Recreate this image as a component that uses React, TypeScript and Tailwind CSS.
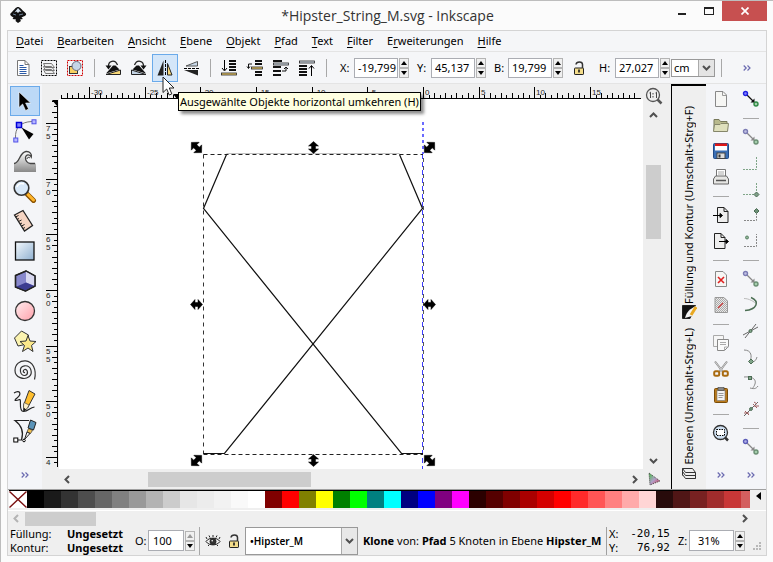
import React from "react";

type Kids = { children?: React.ReactNode };

const ui = "font-['Noto_Sans','Open_Sans',sans-serif] text-[11px] leading-4 text-black";

/* ---------- small building blocks ---------- */

function Svg({ size, children }: Kids & { size: 16 | 18 | 24 }) {
  const cls = size === 24 ? "size-6" : size === 18 ? "size-[18px]" : "size-4";
  return (
    <svg viewBox={`0 0 ${size} ${size}`} className={`${cls} shrink-0`} fill="none" stroke="#222" aria-hidden="true">
      {children}
    </svg>
  );
}

function ToolButton({ label, active, children }: Kids & { label: string; active?: boolean }) {
  return (
    <button
      aria-label={label}
      className={`flex h-7 w-[26px] shrink-0 items-center justify-center border ${
        active ? "border-[#6aaaea] bg-[#d4e6f9]" : "border-transparent"
      }`}
    >
      {children}
    </button>
  );
}

function VSep() {
  return (
    <span className="flex w-3 shrink-0 justify-center">
      <span className="h-[18px] w-px bg-[#a8a8a8]" />
    </span>
  );
}

function HSep() {
  return (
    <span className="flex h-3 w-full shrink-0 items-center justify-center">
      <span className="h-px w-4 bg-[#a8a8a8]" />
    </span>
  );
}

function More() {
  return (
    <button aria-label="Mehr" className="flex h-7 w-full items-center justify-center">
      <svg viewBox="0 0 8 6" className="h-[6px] w-2" fill="none" stroke="#6a6ab0" strokeWidth="1.2">
        <path d="M.7.5 3.2 3 .7 5.5M4.5.5 7 3 4.5 5.5" />
      </svg>
    </button>
  );
}

function Spinner({ dimUp }: { dimUp?: boolean }) {
  return (
    <span className="flex w-[10px] shrink-0 flex-col">
      <button aria-label="Erhöhen" className="flex h-[10px] items-center justify-center border border-[#b4b4b4] bg-[#f0f0f0]">
        <svg viewBox="0 0 6 4" className="h-1 w-[6px]" fill={dimUp ? "#999" : "#000"}>
          <path d="M3 0 6 4H0z" />
        </svg>
      </button>
      <button aria-label="Verringern" className="flex h-[10px] items-center justify-center border border-[#b4b4b4] bg-[#f0f0f0]">
        <svg viewBox="0 0 6 4" className="h-1 w-[6px]" fill="#000">
          <path d="M0 0h6L3 4z" />
        </svg>
      </button>
    </span>
  );
}

function NumberField({ id, label, value, wide }: { id: string; label: string; value: string; wide?: boolean }) {
  return (
    <span className="flex shrink-0 items-center">
      <label htmlFor={id} className={wide ? "w-4" : "w-[14px]"}>
        {label}
      </label>
      <input
        id={id}
        defaultValue={value}
        className="mr-px h-5 w-11 border border-[#abadb3] bg-white pl-[3px] outline-none"
      />
      <Spinner />
    </span>
  );
}

function Chevron({ dir, dim }: { dir: "left" | "right" | "up" | "down"; dim?: boolean }) {
  const d = {
    left: "M6 1 2.5 4.5 6 8",
    right: "M3 1l3.5 3.5L3 8",
    up: "M1 6l3.5-3.5L8 6",
    down: "M1 3l3.5 3.5L8 3",
  }[dir];
  return (
    <svg viewBox="0 0 9 9" className="size-[9px]" fill="none" stroke={dim ? "#b4b4b4" : "#505050"} strokeWidth="2">
      <path d={d} />
    </svg>
  );
}

function Unlock() {
  return (
    <Svg size={16}>
      <rect x="3.5" y="8" width="9" height="6.5" rx=".6" fill="#f3dc8a" stroke="#222" />
      <path d="M11.5 8V4.500C11.500 1 5.500 1 5 4.500" stroke="#333" strokeWidth="1.500" />
      <path d="M8 9.500v3" strokeWidth="1.700" />
    </Svg>
  );
}

/* ---------- top tool bar icons ---------- */

const IconSelectAll = (
  <Svg size={18}>
    <path d="M3.500 1.500h7.500l4 4v11h-11.500z" fill="#fff" stroke="#777" />
    <path d="M11 1.500v4h4" stroke="#777" />
    <path d="M5.500 6.500h4M5.500 8.500h7M5.500 10.500h7M5.500 12.500h7M5.500 14.500h7" stroke="#2a5aa8" strokeWidth="1.200" />
  </Svg>
);
const IconSelectLayers = (
  <Svg size={18}>
    <rect x="1.500" y="1.500" width="15" height="15" stroke="#000" strokeDasharray="2 1" />
    <path d="M3.500 10.500h8l3 4h-9zM3.500 7.500h8l3 4h-9zM3.500 4.500h8l3 4h-9z" fill="#eee" stroke="#777" />
  </Svg>
);
const IconDeselect = (
  <Svg size={18}>
    <rect x="1.500" y="1.500" width="15" height="15" stroke="#d00000" strokeDasharray="2 1" />
    <rect x="3.500" y="7.500" width="8" height="7" fill="#f8d060" stroke="#333" />
    <circle cx="10.500" cy="7" r="4.500" fill="#c6d6e6" stroke="#667" />
  </Svg>
);
const IconRotL = (
  <Svg size={18}>
    <path d="M9 6.500h2.500l4 4L2 14.500z" fill="#111" stroke="none" />
    <path d="M2 15.500h14.500v-4.500z" fill="#f8d878" stroke="#222" />
    <path d="M4.500 8C4 1.500 11 0 13.500 6" strokeWidth="1.300" />
    <path d="M1.500 6.500h6l-3 4z" fill="#111" stroke="none" />
  </Svg>
);
const IconRotR = (
  <Svg size={18}>
    <path d="M9 6.500H6.500l-4 4L16 14.500z" fill="#111" stroke="none" />
    <path d="M16 15.500H1.500v-4.500z" fill="#c4d4e4" stroke="#222" />
    <path d="M13.500 8C14 1.500 7 0 4.500 6" strokeWidth="1.300" />
    <path d="M16.500 6.500h-6l3 4z" fill="#111" stroke="none" />
  </Svg>
);
const IconFlipH = (
  <Svg size={18}>
    <path d="M7.500 1.500v15H1.500z" fill="#222" stroke="none" />
    <path d="M11.500 4.500v11.500h4.500z" fill="#f5d77a" stroke="#222" />
    <path d="M9.500 1v16" stroke="#000" strokeDasharray="3 1" />
  </Svg>
);
const IconFlipV = (
  <Svg size={18}>
    <path d="M15.500 2.500v4.500H4z" fill="#c8d8e8" stroke="#555" />
    <path d="M2 11h14v5.500z" fill="#222" stroke="none" />
    <path d="M2 9.500h15" stroke="#000" strokeDasharray="3 1" />
  </Svg>
);
const IconToBottom = (
  <Svg size={18}>
    <path d="M4.500 1v10M2 9l2.500 3L7 9" stroke="#000" />
    <path d="M9 2h7M9 5h7M9 8h7M9 11h7" stroke="#111" strokeWidth="2" />
    <rect x="1.500" y="14" width="15" height="2" fill="#f3d06a" stroke="#222" strokeWidth=".8" />
  </Svg>
);
const IconLower = (
  <Svg size={18}>
    <path d="M9 2h7M9 5h7M9 13h7M9 16h7" stroke="#111" strokeWidth="2" />
    <path d="M6 5H2.500v4M1 7.500l1.500 2L4 7.500" stroke="#111" />
    <rect x="5.500" y="8" width="11" height="2" fill="#f3d06a" stroke="#222" strokeWidth=".8" />
  </Svg>
);
const IconRaise = (
  <Svg size={18}>
    <path d="M1 2h9M1 8h8M1 12h8M1 16h8" stroke="#111" strokeWidth="2" />
    <rect x="1.500" y="4" width="15" height="2" fill="#dde6f0" stroke="#222" strokeWidth=".8" />
    <path d="M10 12h4V8.500M12 10l2-2 2 2" stroke="#111" />
  </Svg>
);
const IconToTop = (
  <Svg size={18}>
    <rect x="1.500" y="2" width="15" height="2" fill="#dde6f0" stroke="#222" strokeWidth=".8" />
    <path d="M1 7h8M1 10h8M1 13h8M1 16h8" stroke="#111" strokeWidth="2" />
    <path d="M13.500 17V7M11 9.500 13.500 6.500 16 9.500" stroke="#000" />
  </Svg>
);

/* ---------- tool box icons ---------- */

const toolbox: { label: string; icon: React.ReactNode }[] = [
  {
    label: "Auswählen",
    icon: <path d="M6 3v15.500l3.600-3.500 3 6.500 3-1.500-3-6h5z" fill="#000" stroke="#fff" strokeWidth=".6" />,
  },
  {
    label: "Knoten bearbeiten",
    icon: (
      <>
        <path d="M2.500 19C2 9 7 3 19 2.500" stroke="#777" />
        <rect x="3.500" y="3.500" width="5" height="5" fill="#8080ff" stroke="#0000d8" strokeWidth="1.500" />
        <rect x="19" y=".8" width="4" height="4" fill="#b8b8ff" stroke="#5050e8" />
        <rect x=".8" y="19" width="4" height="4" fill="#b8b8ff" stroke="#5050e8" />
        <path d="M8.500 8.500 20.500 15 16 20.500z" fill="#000" stroke="none" />
      </>
    ),
  },
  {
    label: "Verbessern",
    icon: (
      <>
        <path d="M1 15C6 14 6 3 13 2.500c4 0 6 3 5 7-1-2-4-3-5-1s0 5 3 6h7v8.500H1z" fill="url(#waveFill)" stroke="none" />
        <path d="M1 14.500c6 0 5-11 12-12 4-.3 6 3 5.300 5.500C17 5 13 5 12.500 8.500c-.3 3 2 6 5 6H22" stroke="#444" strokeWidth="1.300" />
        <path d="M14 10c0-2 2-2 3-1" stroke="#444" />
      </>
    ),
  },
  {
    label: "Zoom",
    icon: (
      <>
        <path d="M14.500 15.500l6 6" stroke="#8a5200" strokeWidth="5" strokeLinecap="round" />
        <path d="M15 15.500l5.500 5.500" stroke="#ffb52b" strokeWidth="3" strokeLinecap="round" />
        <circle cx="8.500" cy="9" r="7.300" fill="#d8e8f8" stroke="#333" strokeWidth="1.600" />
        <path d="M4 8c1-3 4-4 7-3" stroke="#fff" strokeWidth="1.500" />
      </>
    ),
  },
  {
    label: "Messen",
    icon: (
      <>
        <path d="M1.500 6 10 1.500 19.500 16.500 11.500 22z" fill="#f6d5c3" stroke="#222" strokeWidth="1.300" />
        <path d="M2.500 8l3-1.500M4 10.500l2-1M5.500 12.500l3-1.500M7 15l2-1M8.500 17l3-1.500M10 19.500l2-1" />
      </>
    ),
  },
  {
    label: "Rechteck",
    icon: <rect x="2.500" y="3" width="18.500" height="18" fill="url(#rectFill)" stroke="#111" strokeWidth="1.300" />,
  },
  {
    label: "3D-Box",
    icon: (
      <>
        <path d="M2.500 6.500 13 2l9 5v10l-9.500 5L2.500 18z" fill="#8888cc" strokeWidth="1.400" />
        <path d="M13 2.500 21.500 7.200V17L13 13.500z" fill="#d8d8f0" stroke="none" />
        <path d="M2.500 18 13 13.500 21.500 17l-9 4.500z" fill="#3c3c90" stroke="none" />
        <path d="M2.500 6.500 13 2l9 5v10l-9.500 5L2.500 18z" strokeWidth="1.300" />
      </>
    ),
  },
  { label: "Ellipse", icon: <circle cx="12" cy="12" r="9.500" fill="url(#circleFill)" stroke="#333" strokeWidth="1.300" /> },
  {
    label: "Sterne",
    icon: (
      <>
        <path d="M1.500 9 8.500 2l7 4-1 9-9.500 2z" fill="#fbf3b0" stroke="#333" />
        <path d="m15 6.500 2 5.500 6 .5-4.500 4 1.500 6-5-3.500-5.500 3.500 2-6L7 12.500l6-.5z" fill="#fbe88a" stroke="#333" />
      </>
    ),
  },
  {
    label: "Spirale",
    icon: (
      <path
        d="M12 13.500c-2 .5-2.500-2.500-.3-3 3.300-.5 4 5 .3 6C7 17 5 8 11.500 6.800c7-.8 8.500 8 4.500 11C11 21.500 2 18.500 2 11.500 2 5 7 1.500 12.500 1.800c7 .4 11.500 8.500 9 18.700"
        stroke="#333"
        strokeWidth="1.200"
      />
    ),
  },
  {
    label: "Freihandlinien",
    icon: (
      <>
        <path d="M1 4c6-4 8 1 3 5-4 3-1 3 2.500 1.500C9 10 5 22 10.500 22.500c5 0 6-4 11-4.500" strokeWidth="1.200" />
        <path d="M16 1.500 22 5l-7.500 14-3.500 3-.5-5.500z" fill="#ffbf30" stroke="#333" />
        <path d="M11 13.500 16 16l-1.500 3-3.500 3-.5-5z" fill="#fdf0c8" stroke="#333" strokeWidth=".6" />
        <path d="M11 19.500l1.700 1L11 22z" fill="#000" />
      </>
    ),
  },
  {
    label: "Bézierkurven",
    icon: (
      <>
        <path d="M16 1.500H2C8 6 11 13 8.500 21H3" strokeWidth="1.200" />
        <rect x=".8" y="19" width="4" height="4" fill="#fff" stroke="#000" />
        <circle cx="11" cy="21.500" r="1.300" fill="#fff" stroke="#000" />
        <path d="M17.500 1 23 3.500 20.500 11 15 9z" fill="#5a93b8" stroke="#222" />
        <path d="M15.500 9.500l4 2-2 3-3.500-1.500z" fill="#f0c050" stroke="#333" strokeWidth=".7" />
        <path d="M14 13l3 1.500-5.500 6z" fill="#eee" stroke="#222" />
      </>
    ),
  },
];

/* ---------- command bar icons ---------- */

const page = <path d="M3.500 1.500h7.500l3.500 3.500v11.500h-11z" fill="#f6f6f4" stroke="#888" />;

const commands: { label: string; sep?: boolean; icon: React.ReactNode }[] = [
  { label: "Neu", icon: <>{page}<path d="M10.500 2v3.500h4" stroke="#999" /></> },
  {
    label: "Öffnen",
    icon: (
      <>
        <path d="M2 15V3.500h5l1.500 2H15V15z" fill="#b8b98c" stroke="#77785a" />
        <path d="M1.500 15.500 2.500 8.500H8l1-1h7.500l-1 8z" fill="#dfe0bd" stroke="#85866a" />
      </>
    ),
  },
  {
    label: "Speichern",
    icon: (
      <>
        <rect x="1.500" y="1.500" width="15" height="15" rx="1" fill="#3b6fb5" stroke="#204a87" />
        <rect x="3" y="2" width="12" height="6.500" fill="#fff" stroke="none" />
        <rect x="3" y="1.500" width="12" height="2.500" fill="#e01818" stroke="none" />
        <rect x="5" y="11" width="8" height="5.500" fill="#ddd" stroke="#444" />
        <rect x="6.500" y="12.500" width="2" height="3" fill="#333" stroke="none" />
      </>
    ),
  },
  {
    label: "Drucken",
    icon: (
      <>
        <path d="M4.500 8V1.500h9V8" fill="#fff" stroke="#777" />
        <path d="M6 4h6M6 6h6" stroke="#aaa" />
        <path d="M3.500 8h11l2 3v5h-15v-5z" fill="#e6e6e4" stroke="#666" />
        <path d="M4 12.500h10" stroke="#555" strokeWidth="1.500" />
      </>
    ),
  },
  {
    label: "Importieren",
    sep: true,
    icon: (
      <>
        <path d="M5.500 1.500h6.500l4 4v11H5.500z" fill="#eee" stroke="#222" />
        <path d="M12 1.500v4h4" stroke="#222" />
        <path d="M1 9.500h9M8 7.500l2.500 2L8 11.500z" fill="#000" stroke="#000" />
      </>
    ),
  },
  {
    label: "Exportieren",
    icon: (
      <>
        <path d="M2.500 1.500H9l4 4v11H2.500z" fill="#eee" stroke="#222" />
        <path d="M9 1.500v4h4" stroke="#222" />
        <path d="M7 9.500h8M14 7.500l2.500 2-2.500 2z" fill="#000" stroke="#000" />
      </>
    ),
  },
  { label: "Rückgängig", sep: true, icon: <>{page}<path d="M6 7l6 6M12 7l-6 6" stroke="#e02020" strokeWidth="1.600" /></> },
  {
    label: "Wiederholen",
    icon: (
      <>
        <path d="M3 1.500h9l3.500 3.500v11.500H3z" fill="url(#checker)" stroke="#999" />
        <path d="M6 12l5-5" stroke="#d04040" strokeWidth="1.300" />
      </>
    ),
  },
  {
    label: "Kopieren",
    sep: true,
    icon: (
      <>
        <path d="M1.500 1.500h10v11h-10z" fill="#f6f6f6" stroke="#aaa" />
        <path d="M5.500 5.500h11v7l-4 4h-7z" fill="#fafafa" stroke="#888" />
        <path d="M8 8.500h6M8 10.500h6M12.500 16.500v-3.500h4" stroke="#aaa" />
      </>
    ),
  },
  {
    label: "Ausschneiden",
    icon: (
      <>
        <path d="M3 1.500 11 12M15 1.500 7 12" stroke="#888" strokeWidth="2" />
        <path d="M3 1.500 11 12M15 1.500 7 12" stroke="#eee" strokeWidth=".7" />
        <rect x="2.200" y="11.200" width="5" height="4.600" rx="1.500" stroke="#a86a10" strokeWidth="2" />
        <rect x="10.800" y="11.200" width="5" height="4.600" rx="1.500" stroke="#a86a10" strokeWidth="2" />
      </>
    ),
  },
  {
    label: "Einfügen",
    icon: (
      <>
        <rect x="2.500" y="2.500" width="13" height="14" rx="1" fill="#b97a1c" stroke="#7a4c08" />
        <rect x="5" y="4.500" width="8" height="10" fill="#f4f4f4" stroke="#777" strokeWidth=".6" />
        <rect x="6" y="1.500" width="6" height="3" fill="#888" stroke="#444" strokeWidth=".6" />
        <path d="M6.500 7.500h5M6.500 9.500h5M6.500 11.500h4" stroke="#999" />
      </>
    ),
  },
  {
    label: "Auswahl zoomen",
    sep: true,
    icon: (
      <>
        <path d="M13 13.500l3 3" strokeWidth="2.500" stroke="#333" />
        <circle cx="8.500" cy="8.500" r="7" fill="#cfe0f2" stroke="#333" strokeWidth="1.300" />
        <rect x="4.500" y="5.500" width="8" height="6" fill="#fff" stroke="#000" strokeDasharray="1.500 1" />
      </>
    ),
  },
];

/* ---------- snap bar icons ---------- */

const diag = (c: string, f: string, a: string, g: string) => (
  <>
    <path d="M4.500 4.500 12 12" stroke={a} strokeWidth="1.300" />
    <path d="M12.500 8.500v4h-4z" fill={a} stroke="none" />
    <circle cx="3.500" cy="3.500" r="2" fill={f} stroke={c} strokeWidth="1.400" />
    <circle cx="14" cy="14" r="2" fill="#a4cfac" stroke={g} strokeWidth="1.400" />
  </>
);
const faded = diag("#7c7cb4", "#c0c0e4", "#888", "#6b8f74");
const dash = { stroke: "#7fa588", strokeDasharray: "2 1" };

const snaps: { label: string; sep?: boolean; icon: React.ReactNode }[] = [
  { label: "Einrasten", icon: diag("#2020e0", "#8080ff", "#111", "#2f8a45") },
  { label: "Umrandungsboxen", sep: true, icon: faded },
  { label: "Kanten", icon: <path d="M1 15.500h13.500V2" {...dash} /> },
  {
    label: "Ecken",
    icon: <><path d="M1 14.500h11M14.500 11V2" {...dash} /><path d="M14.500 12l2.500 2.500-2.500 2.500-2.500-2.500z" fill="#7f9f88" stroke="#4c6c55" /></>,
  },
  {
    label: "Kantenmitten",
    icon: <><path d="M2 14.500h12.500V8" stroke="#888" strokeDasharray="2 1" /><path d="M14.500 2.500 17 5l-2.500 2.500L12 5z" fill="#6b8f74" stroke="#4c6c55" /></>,
  },
  {
    label: "Boxmitten",
    icon: <><path d="M2 14.500h12.500V2" stroke="#888" strokeDasharray="2 1" /><circle cx="5" cy="5.500" r="1.500" fill="#8fb598" stroke="#5a8064" /></>,
  },
  { label: "Knoten", sep: true, icon: faded },
  { label: "Pfade", icon: <><path d="M2 2.500c5 0 10 3 13 6" stroke="#bbb" /><path d="M9 1.500c9 4 6 12-6 13" stroke="#4c6f54" strokeWidth="1.400" /></> },
  { label: "Überschneidungen", icon: <><path d="M1 13 16 5M3 16 14 2" stroke="#666" /><circle cx="8.500" cy="9" r="1.500" fill="#80a488" stroke="#4c6c55" /></> },
  { label: "Spitze Knoten", icon: <><path d="M2 2c8 0 8 7 6 11M9 14c4 0 5-2 6-5" stroke="#888" /><path d="M9 11l2.500 2.500L9 16l-2.500-2.500z" fill="#80a488" stroke="#4c6c55" /></> },
  { label: "Glatte Knoten", icon: <><path d="M2 3c12-1 14 5 8 12M16 12c-2 3-4 3-8 2" stroke="#888" /><rect x="6.500" y="2.500" width="3" height="3" fill="#80a488" stroke="#4c6c55" /></> },
  { label: "Linienmitten", icon: <><path d="M2 16 16 2" stroke="#666" /><path d="M3 11l4 4M2 13h5M11 4l4 4M12 6h5M12 2l3 2" stroke="#a06060" /><circle cx="9" cy="9" r="1.400" fill="#80a488" stroke="#4c6c55" /></> },
  { label: "Andere Punkte", sep: true, icon: diag("#5c5cb8", "#b0b0e8", "#888", "#6b8f74") },
];

/* ---------- rulers and canvas ---------- */

const STEP = 5.565;
const rulerText = "font-['Liberation_Sans',sans-serif] text-[8px]";

function HRuler() {
  const ticks = Array.from({ length: 104 }, (_, k) => k - 65);
  return (
    <svg className="block h-[15px] w-full bg-[#efefef]" aria-hidden="true">
      <path d="M2 14.500H582" stroke="#000" />
      {ticks.map((i) => {
        const x = Math.round(364 + i * STEP) + 0.5;
        const major = i % 10 === 0;
        return <path key={i} d={`M${x} ${major ? 3 : i % 2 ? 11 : 9}V14`} stroke="#000" />;
      })}
      {[-30, -25, -20, -15, -10, -5, 0, 5, 10, 15].map((n) => (
        <text key={n} x={Math.round(364 + n * 2 * STEP) + 2} y="11" className={rulerText} fill="#222">
          {n}
        </text>
      ))}
      <path d="M114 10h8l-4 5z" fill="#000" />
    </svg>
  );
}

function VRuler() {
  const ticks = Array.from({ length: 66 }, (_, k) => k - 4);
  return (
    <svg className="block h-full w-[17px] bg-[#efefef]" aria-hidden="true">
      <path d="M15.500 1V368" stroke="#000" />
      {ticks.map((i) => {
        const y = Math.round(24 + i * STEP) + 0.5;
        return y < 369 ? <path key={i} d={`M${i % 10 === 0 ? 4 : i % 2 ? 12 : 10} ${y}H15`} stroke="#000" /> : null;
      })}
      {["75", "70", "65", "60", "55", "50", "4"].map((n, k) =>
        n.split("").map((c, j) => (
          <text key={`${k}-${j}`} x="4" y={Math.round(24 + k * 10 * STEP) + 8 + j * 8} className={rulerText} fill="#222">
            {c}
          </text>
        )),
      )}
      <path d="M10 1h5v6z" fill="#000" />
    </svg>
  );
}

const arrow = "M-6 0-1.500-5v3h3v-3L6 0 1.500 5V2h-3v3z";
const handles: [number, number, number][] = [
  [196.5, 147.5, 45], [313.5, 147.5, 90], [429.5, 147.5, -45],
  [196.5, 304.5, 0], [429.5, 304.5, 0],
  [196.5, 460.5, -45], [313.5, 460.5, 90], [429.5, 460.5, 45],
];

function Canvas() {
  return (
    <div className="relative overflow-hidden bg-white">
      <svg viewBox="59 99 583 370" className="absolute top-0 left-0 h-[370px] w-[583px]" fill="none">
        <path d="M423 122V154" stroke="#6a6aff" strokeWidth="2" strokeDasharray="3 3" />
        <path d="M422.500 154V469" stroke="#4040ff" strokeDasharray="5 3" />
        <path d="M423.500 154V454" stroke="#555" strokeDasharray="4 4" strokeDashoffset="4" />
        <path d="M203.500 154.500V454" stroke="#333" strokeDasharray="4 4" />
        <path d="M203.500 154.500H423M203.500 454.500H423" stroke="#222" strokeDasharray="4 3" />
        <path d="M226.500 153.500H399.500" stroke="#999" strokeWidth=".6" />
        <path d="M226.500 154.500 203.500 208.500 401.500 453.500H423M399.500 154.500 422.500 208.500 224.500 453.500H203.500" stroke="#111" strokeWidth="1.200" />
        {handles.map(([x, y, r]) => (
          <path
            key={`${x}-${y}`}
            d={arrow}
            transform={`translate(${x} ${y}) rotate(${r})${Math.abs(r) === 45 ? " scale(1.2 1.100)" : ""}`}
            fill="#000"
            stroke="#000"
            strokeWidth=".5"
          />
        ))}
      </svg>
    </div>
  );
}

const swatches = [
  "bg-[#000000]", "bg-[#1a1a1a]", "bg-[#333333]", "bg-[#4d4d4d]", "bg-[#666666]", "bg-[#808080]", "bg-[#999999]",
  "bg-[#b3b3b3]", "bg-[#cccccc]", "bg-[#e6e6e6]", "bg-[#ececec]", "bg-[#f2f2f2]", "bg-[#f9f9f9]", "bg-[#ffffff]",
  "bg-[#800000]", "bg-[#ff0000]", "bg-[#808000]", "bg-[#ffff00]", "bg-[#008000]", "bg-[#00ff00]", "bg-[#008080]",
  "bg-[#00ffff]", "bg-[#000080]", "bg-[#0000ff]", "bg-[#800080]", "bg-[#ff00ff]", "bg-[#2b0000]", "bg-[#550000]",
  "bg-[#800000]", "bg-[#aa0000]", "bg-[#d40000]", "bg-[#ff0000]", "bg-[#ff2a2a]", "bg-[#ff5555]", "bg-[#ff8080]",
  "bg-[#ffaaaa]", "bg-[#ffd5d5]", "bg-[#280b0b]", "bg-[#501616]", "bg-[#782121]", "bg-[#a02c2c]", "bg-[#c83737]",
  "bg-[#d35f5f]",
];

const menus = ["Datei", "Bearbeiten", "Ansicht", "Ebene", "Objekt", "Pfad", "Text", "Filter", "Erweiterungen", "Hilfe"];
/* position of the underlined access key where it is not the first letter */
const accessKey: Record<string, number> = { Erweiterungen: 1 };

function TitleBar() {
  return (
    <header className="flex h-[29px] shrink-0 items-start">
      <svg viewBox="0 0 18 18" className="mt-[5px] ml-2 size-[18px]" aria-hidden="true">
        <path d="M9 1c2 0 3 2 7.500 6 1.500 1.500 0 3-2 3.500l-2 1 1.500 1.500-3 .5 1 1.500L9 17l-2.500-2L7 13.500l-3.500-.5 1-1.500C2 10 .5 9 1.500 7.500 6 3 7 1 9 1z" fill="#111" />
        <path d="M9 2 12.500 6l-2-.5L9 7 7.500 5.500l-2 1z" fill="#d8e4f0" />
        <path d="M4 8l3 1M10 9l4-1" stroke="#6d7f95" />
      </svg>
      <h1 className="mt-[5px] flex-1 pl-20 text-center font-['Open_Sans','Noto_Sans',sans-serif] text-sm leading-5 text-[#333]">
        *Hipster_String_M.svg - Inkscape
      </h1>
      <button aria-label="Minimieren" className="flex h-[19px] w-7 items-end justify-center pb-[5px]">
        <span className="h-[2px] w-2 bg-[#222]" />
      </button>
      <button aria-label="Maximieren" className="flex h-[19px] w-[26px] items-center justify-center">
        <span className="h-2 w-[10px] border border-t-2 border-[#222]" />
      </button>
      <button aria-label="Schließen" className="flex h-5 w-[45px] items-center justify-center bg-[#c75050]">
        <svg viewBox="0 0 8 8" className="size-2" stroke="#fff" strokeWidth="1.700">
          <path d="M.5.500l7 7M7.500.500l-7 7" />
        </svg>
      </button>
      <span className="w-[6px]" />
    </header>
  );
}

function TopBar() {
  return (
    <div className="relative flex h-8 shrink-0 items-center border-b border-[#e4e4e4] bg-[#f5f6f8] pl-[2px]">
      <ToolButton label="Alles auswählen">{IconSelectAll}</ToolButton>
      <ToolButton label="In allen Ebenen auswählen">{IconSelectLayers}</ToolButton>
      <ToolButton label="Auswahl aufheben">{IconDeselect}</ToolButton>
      <VSep />
      <ToolButton label="Gegen Uhrzeigersinn drehen">{IconRotL}</ToolButton>
      <ToolButton label="Im Uhrzeigersinn drehen">{IconRotR}</ToolButton>
      <ToolButton label="Horizontal umkehren" active>{IconFlipH}</ToolButton>
      <ToolButton label="Vertikal umkehren">{IconFlipV}</ToolButton>
      <VSep />
      <ToolButton label="Ganz nach unten">{IconToBottom}</ToolButton>
      <ToolButton label="Absenken">{IconLower}</ToolButton>
      <ToolButton label="Anheben">{IconRaise}</ToolButton>
      <ToolButton label="Ganz nach oben">{IconToTop}</ToolButton>
      <VSep />
      <div className="flex items-center gap-2 pl-2">
        <NumberField id="x" label="X:" value="-19,799" />
        <NumberField id="y" label="Y:" value="45,137" />
        <NumberField id="b" label="B:" value="19,799" />
        <button aria-label="Seitenverhältnis sperren" className="mr-1 size-4">
          <Unlock />
        </button>
        <NumberField id="h" label="H:" value="27,027" wide />
      </div>
      <span className="ml-px flex h-[18px] w-11 shrink-0 border border-[#999] bg-white">
        <select aria-label="Einheit" className="min-w-0 flex-1 appearance-none pl-[2px] leading-4 outline-none">
          <option>cm</option>
        </select>
        <span className="flex w-4 items-center justify-center border-l border-[#aaa] bg-[#e4e4e4]">
          <Chevron dir="down" />
        </span>
      </span>
      <VSep />
      <span className="ml-auto w-[38px]">
        <More />
      </span>
      <div className="pointer-events-none absolute top-[40px] left-[170px] z-20 border border-black bg-[#ffffe1] px-px leading-[17px] whitespace-nowrap shadow-[3px_3px_3px_rgba(0,0,0,0.45)]" role="tooltip">
        Ausgewählte Objekte horizontal umkehren (H)
      </div>
      <svg viewBox="0 0 13 20" className="pointer-events-none absolute top-6 left-[154px] z-30 h-5 w-[13px]">
        <path d="M1 1v15.500l3.700-3.500 2.500 6 2.600-1.100-2.500-5.900H12z" fill="#fff" stroke="#222" />
      </svg>
    </div>
  );
}

function Dock() {
  return (
    <div className="flex w-[35px] shrink-0 flex-col items-center justify-end border-t-2 border-l border-black bg-[#efefef] pr-px pb-2">
      <button className="flex flex-col items-center">
        <span className="rotate-180 leading-4 whitespace-nowrap [writing-mode:vertical-rl]">Füllung und Kontur (Umschalt+Strg+F)</span>
        <Svg size={16}>
          <path d="M1.500 1.500h13L9 14.500H1.500z" fill="#111" />
          <path d="M4 14C6 7 9 5 15 2l-4 10z" fill="#f4f4f4" stroke="none" />
          <path d="M10 11l5-8" stroke="#e8a820" strokeWidth="3" />
        </Svg>
      </button>
      <button className="mt-2 flex flex-col items-center">
        <span className="rotate-180 leading-4 whitespace-nowrap [writing-mode:vertical-rl]">Ebenen (Umschalt+Strg+L)</span>
        <Svg size={16}>
          <path d="M1.500 9.500l3 4h10v-2M1.500 6.500l3 4h10v-2M1.500 3.500l3 4h10l-3-4z" fill="#eee" stroke="#333" />
          <path d="M1.500 3.500v7M14.500 7.500v6" stroke="#333" />
        </Svg>
      </button>
    </div>
  );
}

function Workspace() {
  return (
    <div className="grid min-w-0 flex-1 grid-cols-[17px_minmax(0,1fr)_28px] grid-rows-[15px_minmax(370px,1fr)_20px] bg-[#efefef]">
      <span />
      <HRuler />
      <div className="row-span-3 flex w-[18px] flex-col items-stretch pl-[3px]">
        <button aria-label="Zoom 1:1" className="flex h-[23px] shrink-0 items-center justify-center">
          <Svg size={18}>
            <path d="M12.500 12.500l4 4" stroke="#555" strokeWidth="2.500" />
            <circle cx="8" cy="8" r="6.500" fill="#eee" stroke="#555" strokeWidth="1.300" />
            <path d="M4.500 6l1-.8V11M10.500 6l1-.8V11" stroke="#444" />
            <path d="M8 6v1.500M8 9v1.500" stroke="#444" />
          </Svg>
        </button>
        <button aria-label="Nach oben" className="flex h-[17px] shrink-0 items-center justify-center">
          <Chevron dir="up" />
        </button>
        <div className="flex-1 pt-[41px]">
          <div className="h-[74px] bg-[#cdcdcd]" />
        </div>
        <button aria-label="Nach unten" className="flex h-[17px] shrink-0 items-center justify-center">
          <Chevron dir="down" />
        </button>
        <button aria-label="Farbmanagement" className="flex h-5 shrink-0 items-center justify-center">
          <svg viewBox="0 0 14 14" className="size-[14px] shrink-0" aria-hidden="true">
            <path d="M2 1 13 9 3 13z" fill="url(#gamut)" stroke="#444" strokeDasharray="1 1" />
          </svg>
        </button>
      </div>
      <VRuler />
      <Canvas />
      <span />
      <div className="flex items-center">
        <button aria-label="Nach links" className="flex h-4 w-[17px] items-center justify-center">
          <Chevron dir="left" />
        </button>
        <div className="flex-1 pl-[72px]">
          <div className="h-[15px] w-[163px] bg-[#cdcdcd]" />
        </div>
        <button aria-label="Nach rechts" className="flex h-4 w-[17px] items-center justify-center">
          <Chevron dir="right" />
        </button>
      </div>
    </div>
  );
}

function SideBar({ items }: { items: { label: string; sep?: boolean; icon: React.ReactNode }[] }) {
  return (
    <div className="flex w-[30px] shrink-0 flex-col items-center bg-[#f4f5f8] pt-[2px]">
      {items.map((it) => (
        <React.Fragment key={it.label}>
          {it.sep && <HSep />}
          <button aria-label={it.label} className="flex h-[26px] w-[26px] shrink-0 items-center justify-center">
            <Svg size={18}>{it.icon}</Svg>
          </button>
        </React.Fragment>
      ))}
      <span className="mt-auto w-full">
        <More />
      </span>
    </div>
  );
}

function Palette() {
  return (
    <div className="shrink-0 border-t border-[#a0a0a0] bg-[#efefef]">
      <div className="flex">
        <div className="ml-px flex h-[18px] min-w-0 flex-1 overflow-hidden border-t border-black">
          <button aria-label="Keine Farbe" className="h-[17px] w-[18px] shrink-0 bg-white">
            <svg viewBox="0 0 18 17" className="h-[17px] w-[18px]" stroke="#7a1010" strokeWidth="1.400">
              <path d="M.5.500l17 16M17.500.500l-17 16" />
            </svg>
          </button>
          {swatches.map((c, i) => (
            <button key={i} aria-label={`Farbe ${i + 1}`} className={`h-[17px] w-[17px] shrink-0 ${c}`} />
          ))}
        </div>
        <button aria-label="Palettenmenü" className="flex h-3 w-4 items-center justify-center">
          <svg viewBox="0 0 5 8" className="h-2 w-[5px]">
            <path d="M5 0v8L0 4z" />
          </svg>
        </button>
      </div>
      <div className="h-[3px] border-b border-white" />
      <div className="flex h-[15px] items-center">
        <button aria-label="Palette nach links" className="flex h-[14px] w-[17px] items-center justify-center">
          <Chevron dir="left" dim />
        </button>
        <div className="flex-1">
          <div className="h-[14px] w-[71px] bg-[#cdcdcd]" />
        </div>
        <button aria-label="Palette nach rechts" className="mr-3 flex h-[14px] w-5 items-center justify-center">
          <Chevron dir="right" />
        </button>
      </div>
    </div>
  );
}

function StatusBar() {
  return (
    <footer className="flex h-[29px] shrink-0 items-center bg-[#efefef] pl-[2px]">
      <dl className="grid w-[125px] shrink-0 grid-cols-[57px_1fr] leading-[14px]">
        <dt>Füllung:</dt>
        <dd className="font-bold">Ungesetzt</dd>
        <dt>Kontur:</dt>
        <dd className="font-bold">Ungesetzt</dd>
      </dl>
      <label htmlFor="opacity" className="w-[13px] shrink-0">O:</label>
      <input id="opacity" defaultValue="100" className="mr-px h-[21px] w-9 shrink-0 border border-[#abadb3] bg-white pl-1 outline-none" />
      <Spinner dimUp />
      <span className="ml-1 h-7 w-px shrink-0 bg-[#a8a8a8]" />
      <button aria-label="Ebene sichtbar" className="ml-[5px] size-4 shrink-0">
        <Svg size={16}>
          <path d="M1 8.500C4 4 12 4 15 8.500 12 13 4 13 1 8.500z" fill="#eee" />
          <circle cx="8" cy="8.500" r="3" fill="#333" />
          <circle cx="7.200" cy="7.700" r=".8" fill="#fff" stroke="none" />
          <path d="M2 6 1 4M5 4.500 4 2.500M8 4V2M11 4.500l1-2M14 6l1-2M4 12l-1 1M12 12l1 1" />
        </Svg>
      </button>
      <button aria-label="Ebene sperren" className="ml-[5px] size-4 shrink-0">
        <Unlock />
      </button>
      <span className="ml-[3px] flex h-7 w-[113px] shrink-0 border border-[#999] bg-white">
        <select aria-label="Ebene" className="min-w-0 flex-1 appearance-none pl-1 text-[10px] font-semibold outline-none">
          <option>•Hipster_M</option>
        </select>
        <span className="flex w-4 items-center justify-center border-l border-[#aaa] bg-[#e8e8e8]">
          <Chevron dir="down" />
        </span>
      </span>
      <p className="ml-[5px] min-w-0 flex-1 overflow-hidden whitespace-nowrap">
        <b>Klone</b> von: <b>Pfad</b> 5 Knoten in Ebene <b>Hipster_M</b>
      </p>
      <dl className="grid w-16 shrink-0 grid-cols-[14px_1fr] border-l border-[#a0a0a0] pl-[2px] leading-[14px]">
        <dt>X:</dt>
        <dd className="text-right font-['DejaVu_Sans_Mono',monospace]">-20,15</dd>
        <dt>Y:</dt>
        <dd className="text-right font-['DejaVu_Sans_Mono',monospace]">76,92</dd>
      </dl>
      <label htmlFor="zoom" className="ml-2 w-[11px] shrink-0">Z:</label>
      <input id="zoom" defaultValue="31%" className="mr-px h-[21px] w-[45px] shrink-0 border border-[#abadb3] bg-white pl-2 outline-none" />
      <Spinner />
      <svg viewBox="0 0 9 9" className="mt-auto mr-1 mb-1 ml-2 size-[9px] shrink-0" fill="#b8b8b8" aria-hidden="true">
        <path d="M6 0h2v2H6zM3 3h2v2H3zM6 3h2v2H6zM0 6h2v2H0zM3 6h2v2H3zM6 6h2v2H6z" />
      </svg>
    </footer>
  );
}

function Gradients() {
  return (
    <svg className="absolute size-0" aria-hidden="true">
      <defs>
        <linearGradient id="waveFill" x1="0" y1="0" x2="0" y2="1">
          <stop offset="0" stopColor="#fff" />
          <stop offset="1" stopColor="#888" />
        </linearGradient>
        <linearGradient id="rectFill" x1="0" y1="0" x2="1" y2="1">
          <stop offset="0" stopColor="#f4f9fd" />
          <stop offset="1" stopColor="#8fb0d0" />
        </linearGradient>
        <linearGradient id="circleFill" x1="0" y1="0" x2="1" y2="1">
          <stop offset="0" stopColor="#ffeef0" />
          <stop offset="1" stopColor="#ffa0aa" />
        </linearGradient>
        <linearGradient id="gamut" x1="0" y1="0" x2="1" y2="1">
          <stop offset="0" stopColor="#40c040" />
          <stop offset=".5" stopColor="#b0a0c8" />
          <stop offset="1" stopColor="#d03050" />
        </linearGradient>
        <pattern id="checker" width="2" height="2" patternUnits="userSpaceOnUse">
          <rect width="2" height="2" fill="#e8e8e8" />
          <path d="M0 0h1v1H0zM1 1h1v1H1z" fill="#aaa" />
        </pattern>
      </defs>
    </svg>
  );
}

export default function App() {
  return (
    <div className={`flex min-h-screen flex-col border-t border-l border-[#bdbdbd] bg-[#fbfbfb] ${ui}`}>
      <Gradients />
      <TitleBar />
      <main className="mr-[6px] mb-[6px] ml-[6px] flex flex-1 flex-col border border-[#d4d4d4]">
        <nav className="flex h-[21px] shrink-0 items-center gap-[14px] border-b border-[#e4e4e4] bg-[#f5f6f8] pl-2">
          {menus.map((m) => {
            const k = accessKey[m] ?? 0;
            return (
              <button key={m}>
                {m.slice(0, k)}
                <u className="underline-offset-2">{m[k]}</u>
                {m.slice(k + 1)}
              </button>
            );
          })}
        </nav>
        <TopBar />
        <div className="flex flex-1">
          <div className="flex w-[34px] shrink-0 flex-col items-center bg-[#f4f5f8] pt-[2px]">
            {toolbox.map((t, i) => (
              <button
                key={t.label}
                aria-label={t.label}
                className={`flex size-[30px] shrink-0 items-center justify-center border ${
                  i === 0 ? "border-[#6aaaea] bg-[#bcd9f7]" : "border-transparent"
                }`}
              >
                <Svg size={24}>{t.icon}</Svg>
              </button>
            ))}
            <span className="mt-auto w-full">
              <More />
            </span>
          </div>
          <Workspace />
          <Dock />
          <SideBar items={commands} />
          <SideBar items={snaps} />
        </div>
        <Palette />
        <StatusBar />
      </main>
    </div>
  );
}
